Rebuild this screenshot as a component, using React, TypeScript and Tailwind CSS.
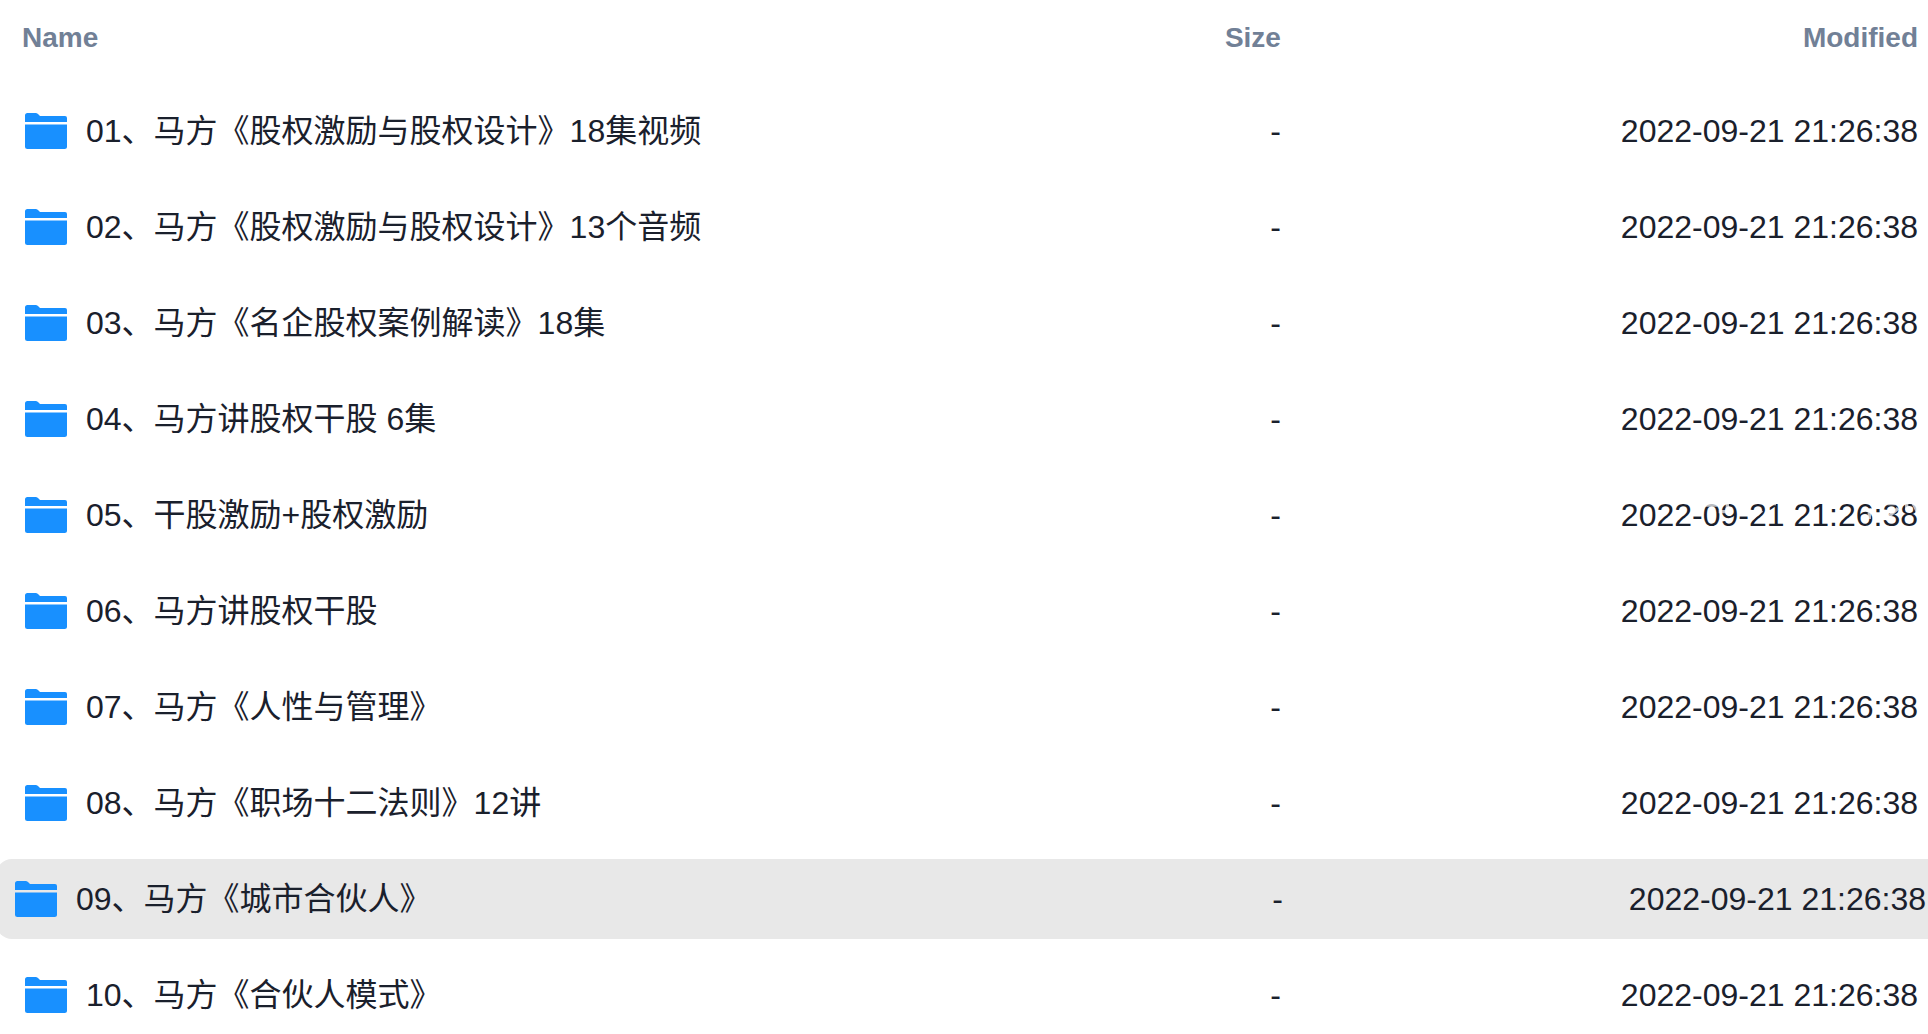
const folders: string[] = [
  "01、马方《股权激励与股权设计》18集视频",
  "02、马方《股权激励与股权设计》13个音频",
  "03、马方《名企股权案例解读》18集",
  "04、马方讲股权干股 6集",
  "05、干股激励+股权激励",
  "06、马方讲股权干股",
  "07、马方《人性与管理》",
  "08、马方《职场十二法则》12讲",
  "09、马方《城市合伙人》",
  "10、马方《合伙人模式》",
];

const highlighted = 8;
const watermarked = 4;
const columns = "grid grid-cols-[494fr_170fr_336fr] items-center px-4";

function FolderIcon() {
  return (
    <svg viewBox="0 0 48 48" className="size-12 shrink-0" fill="#1890ff" aria-hidden="true">
      <path d="M3 15V8.500Q3 6 5.500 6H13.500Q15 6 16 7L18 9H43Q45 9 45 11V15Z" />
      <path d="M3 17.500H45V39.500Q45 42 42.500 42H5.500Q3 42 3 39.500Z" />
    </svg>
  );
}

// Faint white strokes of a watermark, visible only where they cross dark text.
function Watermark() {
  return (
    <svg
      viewBox="0 0 768 108"
      className="pointer-events-none absolute top-0 -right-1.5 h-9 w-64"
      fill="none"
      stroke="#ffffff"
      strokeOpacity="0.7"
      strokeWidth="10"
      aria-hidden="true"
    >
      <path d="M8 32H32M96 42H148M152 62H190M178 28V70M242 90L282 58M304 38H324" />
      <path d="M376 50L392 26M438 34H462M484 42H504M512 88L534 62M576 32L612 36M604 52V84" />
      <path d="M646 38H696M652 86L690 52M716 24V58M732 30L748 62" />
    </svg>
  );
}

export default function App() {
  return (
    <main className="overflow-hidden bg-white pb-6 font-['Liberation_Sans','Noto_Sans_CJK_SC',sans-serif] text-[#1a202c]">
      <table className="-mr-1.5 ml-1.5 block">
        <thead className="block">
          <tr className={`${columns} h-[75px] text-[28px] text-[#718096]`}>
            <th scope="col" className="text-left font-bold">Name</th>
            <th scope="col" className="text-right font-bold">Size</th>
            <th scope="col" className="text-right font-bold">Modified</th>
          </tr>
        </thead>
        <tbody className="flex flex-col gap-4 pt-4 text-[32px]">
          {folders.map((name, i) => (
            <tr
              key={name}
              className={`${columns} h-20 rounded-2xl ${i === highlighted ? "-mr-2 -ml-2.5 bg-[#e8e8e8]" : ""}`}
            >
              <td>
                <a href="#" className="flex items-center gap-4 whitespace-nowrap">
                  <FolderIcon />
                  <span>{name}</span>
                </a>
              </td>
              <td className="text-right">-</td>
              <td className="relative text-right whitespace-nowrap">
                2022-09-21 21:26:38
                {i === watermarked && <Watermark />}
              </td>
            </tr>
          ))}
        </tbody>
      </table>
    </main>
  );
}
